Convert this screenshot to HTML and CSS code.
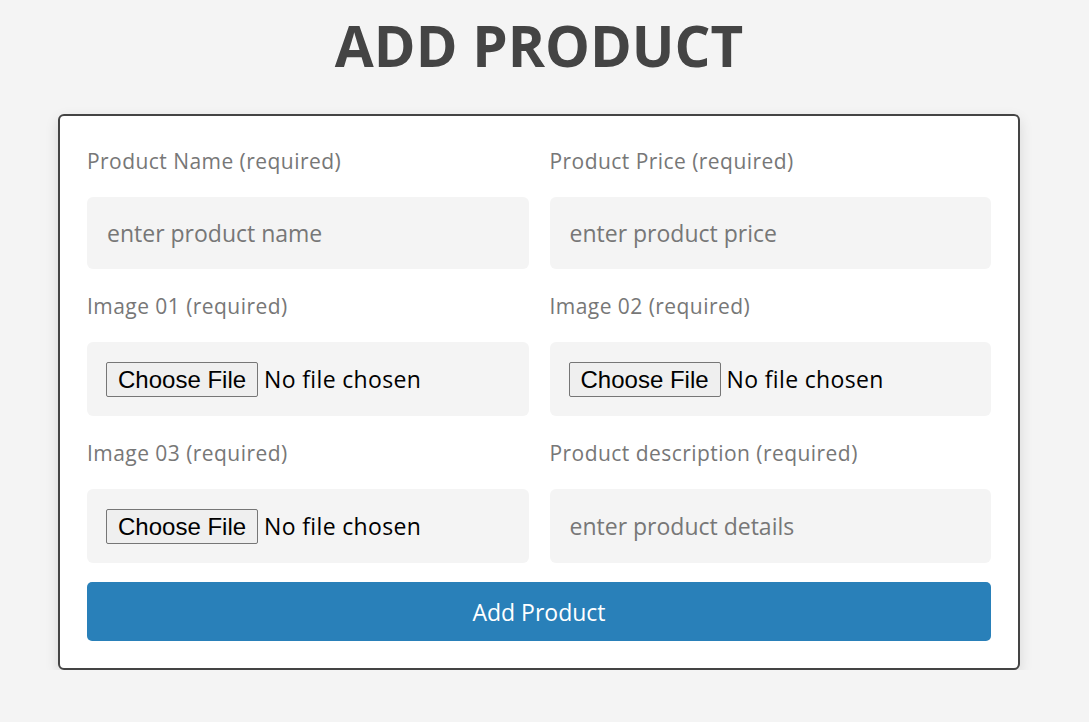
FILE: index.html
```html
<!DOCTYPE html>
<html lang="en">
<head>
<meta charset="utf-8">
<title>Add Product</title>
<link rel="stylesheet" href="styles.css">
</head>
<body>
<h1 class="title">ADD PRODUCT</h1>
<form class="card">
  <div class="field">
    <label class="label" for="name">Product Name (required)</label>
    <input class="control" id="name" type="text" placeholder="enter product name">
  </div>
  <div class="field">
    <label class="label" for="price">Product Price (required)</label>
    <input class="control" id="price" type="text" placeholder="enter product price">
  </div>
  <div class="field">
    <label class="label" for="img1">Image 01 (required)</label>
    <input class="control file" id="img1" type="file">
  </div>
  <div class="field">
    <label class="label" for="img2">Image 02 (required)</label>
    <input class="control file" id="img2" type="file">
  </div>
  <div class="field">
    <label class="label" for="img3">Image 03 (required)</label>
    <input class="control file" id="img3" type="file">
  </div>
  <div class="field">
    <label class="label" for="desc">Product description (required)</label>
    <input class="control tall" id="desc" type="text" placeholder="enter product details">
  </div>
  <button class="submit" type="button">Add Product</button>
</form>
</body>
</html>
```
FILE: styles.css
```css
* { box-sizing: border-box; }
html, body { margin: 0; padding: 0; }
body {
  background: #f4f4f4;
  font-family: "Open Sans", "DejaVu Sans", sans-serif;
  color: #444;
  padding-right: 11px;
}
.title {
  margin: 11px 0 0;
  text-align: center;
  font-size: 56.5px;
  line-height: 70px;
  font-weight: 700;
  color: #444;
}
.card {
  width: 962px;
  margin: 33px auto 0;
  background: #fff;
  border: 2px solid #444;
  border-radius: 6px;
  box-shadow: 0 5px 14px rgba(0,0,0,0.12);
  padding: 31px 27px 27px;
  display: grid;
  grid-template-columns: 1fr 1fr;
  column-gap: 21px;
  row-gap: 23px;
}
.field { display: flex; flex-direction: column; }
.label {
  font-size: 21px;
  letter-spacing: 0.45px;
  line-height: 28px;
  color: #777;
  margin-bottom: 22px;
}
.control {
  width: 100%;
  height: 72px;
  border: none;
  outline: none;
  background: #f4f4f4;
  border-radius: 6px;
  padding: 0 20px;
  font-family: inherit;
  font-size: 23px;
  color: #444;
}
.control::placeholder { color: #777; }
.tall { height: 74px; }
.file {
  height: 74px;
  padding: 20px 19px 19px;
  color: #000;
  letter-spacing: 0.35px;
}
.file::file-selector-button {
  font-family: "Liberation Sans", Arial, sans-serif;
  font-size: 24px;
  letter-spacing: 0;
  height: 35px;
  padding: 0 11px;
  margin-right: 6px;
  background: #efefef;
  border: 1px solid #767676;
  border-radius: 2px;
  color: #000;
}
.submit {
  grid-column: 1 / 3;
  margin-top: -4px;
  height: 59px;
  border: none;
  border-radius: 5px;
  background: #2980b9;
  color: #fff;
  font-family: inherit;
  font-size: 23px;
}
```
